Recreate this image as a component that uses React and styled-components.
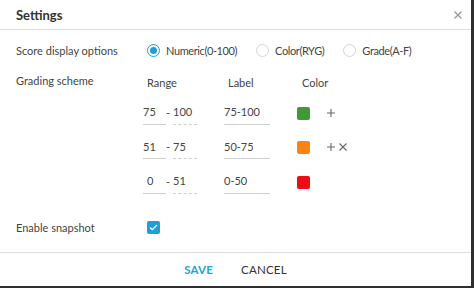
import React from "react";
import styled, { createGlobalStyle } from "styled-components";

const Global = createGlobalStyle`
  html, body { margin: 0; padding: 0; background: #2f2f2f; }
  body { font-family: "Lato", "Open Sans", "Liberation Sans", sans-serif; }
  * { box-sizing: border-box; }
`;

const Dialog = styled.div`
  width: 471px;
  height: 286px;
  background: #fff;
  display: flex;
  flex-direction: column;
  color: #3a3a3a;
  font-size: 11px;
`;

const Header = styled.div`
  height: 30px;
  border-bottom: 1px solid #dcdcdc;
  display: flex;
  align-items: center;
  justify-content: space-between;
  padding: 0 9px 0 16px;
`;

const Title = styled.div`
  font-weight: 700;
  font-size: 13px;
  color: #333;
`;

const Close = styled.button`
  border: 0;
  background: none;
  padding: 0;
  cursor: pointer;
  display: flex;
`;

const Body = styled.div`
  flex: 1;
  padding: 8px 16px 0 16px;
  display: flex;
  flex-direction: column;
`;

const Row = styled.div`
  display: flex;
  align-items: ${(p) => p.$align || "center"};
  min-height: ${(p) => p.$h || 24}px;
  margin-top: ${(p) => p.$mt || 0}px;
`;

const Label = styled.div`
  width: 131px;
  flex: none;
  color: #444;
  padding-top: ${(p) => p.$pt || 0}px;
`;

const RadioGroup = styled.div`
  display: flex;
  align-items: center;
`;

const RadioItem = styled.label`
  display: flex;
  align-items: center;
  gap: 6px;
  margin-right: ${(p) => p.$mr}px;
  color: #444;
  letter-spacing: -0.4px;
`;

const RadioCircle = styled.span`
  width: 13px;
  height: 13px;
  border-radius: 50%;
  border: 1px solid ${(p) => (p.$on ? "#1e9fd9" : "#d5d5d5")};
  display: flex;
  align-items: center;
  justify-content: center;
  &::after {
    content: "";
    width: 7px;
    height: 7px;
    border-radius: 50%;
    background: ${(p) => (p.$on ? "#1e9fd9" : "transparent")};
  }
`;

const Scheme = styled.div`
  display: flex;
  flex-direction: column;
`;

const HeadRow = styled.div`
  display: flex;
  height: 16px;
  align-items: center;
  margin-top: 2px;
  color: #444;
`;

const HeadCell = styled.div`
  width: ${(p) => p.$w}px;
`;

const GradeRow = styled.div`
  display: flex;
  align-items: flex-end;
  height: 34.5px;
  margin-left: -4px;
`;

const Field = styled.div`
  width: ${(p) => p.$w}px;
  height: 24px;
  display: flex;
  align-items: center;
  padding-bottom: 1px;
  padding-left: ${(p) => p.$pl || 0}px;
  margin-left: ${(p) => p.$ml || 0}px;
  border-bottom: 1px ${(p) => (p.$dashed ? "dashed" : "solid")} #cfcfcf;
  color: #444;
`;

const Dash = styled.span`
  width: 7px;
  height: 24px;
  display: flex;
  align-items: center;
  padding-bottom: 1px;
  color: #444;
`;

const Swatch = styled.span`
  width: 13px;
  height: 13px;
  border-radius: 2px;
  background: ${(p) => p.$c};
  margin-left: 27px;
  margin-bottom: 5px;
`;

const Actions = styled.div`
  display: flex;
  align-items: center;
  gap: 4px;
  margin-left: 17px;
  margin-bottom: 8px;
  height: 8px;
`;

const IconBtn = styled.span`
  display: flex;
  width: 8px;
  height: 8px;
`;

const Check = styled.span`
  width: 13px;
  height: 13px;
  border-radius: 2px;
  background: #1e9fd9;
  display: flex;
  align-items: center;
  justify-content: center;
`;

const Footer = styled.div`
  height: 34px;
  border-top: 1px solid #dcdcdc;
  display: flex;
  align-items: center;
  justify-content: center;
  gap: 28px;
`;

const FootBtn = styled.button`
  border: 0;
  background: none;
  padding: 0;
  font-family: inherit;
  font-size: 11.5px;
  font-weight: ${(p) => (p.$primary ? 700 : 400)};
  color: ${(p) => (p.$primary ? "#22a3d6" : "#333")};
  letter-spacing: 0.2px;
`;

const Plus = () => (
  <IconBtn>
    <svg width="8" height="8" viewBox="0 0 8 8">
      <path d="M4 0v8M0 4h8" stroke="#666" strokeWidth="1.1" />
    </svg>
  </IconBtn>
);

const Times = () => (
  <IconBtn>
    <svg width="8" height="8" viewBox="0 0 8 8">
      <path d="M0.5 0.5l7 7M7.5 0.5l-7 7" stroke="#666" strokeWidth="1.1" />
    </svg>
  </IconBtn>
);

const rows = [
  { from: "75", to: "100", label: "75-100", color: "#3f9a36", add: true },
  { from: "51", to: "75", label: "50-75", color: "#fb8314", add: true, del: true },
  { from: "0", to: "51", label: "0-50", color: "#ea0f17" },
];

export default function App() {
  return (
    <>
      <Global />
      <Dialog>
        <Header>
          <Title>Settings</Title>
          <Close aria-label="close">
            <svg width="8" height="8" viewBox="0 0 8 8">
              <path d="M0.5 0.5l7 7M7.5 0.5l-7 7" stroke="#999" strokeWidth="1.4" />
            </svg>
          </Close>
        </Header>
        <Body>
          <Row $h={24}>
            <Label>Score display options</Label>
            <RadioGroup>
              <RadioItem $mr={19}>
                <RadioCircle $on />
                Numeric(0-100)
              </RadioItem>
              <RadioItem $mr={19}>
                <RadioCircle />
                Color(RYG)
              </RadioItem>
              <RadioItem $mr={0}>
                <RadioCircle />
                Grade(A-F)
              </RadioItem>
            </RadioGroup>
          </Row>
          <Row $align="flex-start" $mt={10}>
            <Label $pt={2}>Grading scheme</Label>
            <Scheme>
              <HeadRow>
                <HeadCell $w={81}>Range</HeadCell>
                <HeadCell $w={74}>Label</HeadCell>
                <HeadCell $w={40}>Color</HeadCell>
              </HeadRow>
              {rows.map((r, i) => (
                <GradeRow key={i}>
                  <Field $w={23} $pl={r.from.length === 1 ? 4 : 0}>{r.from}</Field>
                  <Dash>-</Dash>
                  <Field $w={24} $dashed>{r.to}</Field>
                  <Field $w={46} $ml={27}>{r.label}</Field>
                  <Swatch $c={r.color} />
                  <Actions>
                    {r.add && <Plus />}
                    {r.del && <Times />}
                  </Actions>
                </GradeRow>
              ))}
            </Scheme>
          </Row>
          <Row $mt={22}>
            <Label>Enable snapshot</Label>
            <Check>
              <svg width="9" height="7" viewBox="0 0 9 7">
                <path d="M1 3.5l2.3 2.2L8 1" stroke="#fff" strokeWidth="1.3" fill="none" />
              </svg>
            </Check>
          </Row>
        </Body>
        <Footer>
          <FootBtn $primary>SAVE</FootBtn>
          <FootBtn>CANCEL</FootBtn>
        </Footer>
      </Dialog>
    </>
  );
}
